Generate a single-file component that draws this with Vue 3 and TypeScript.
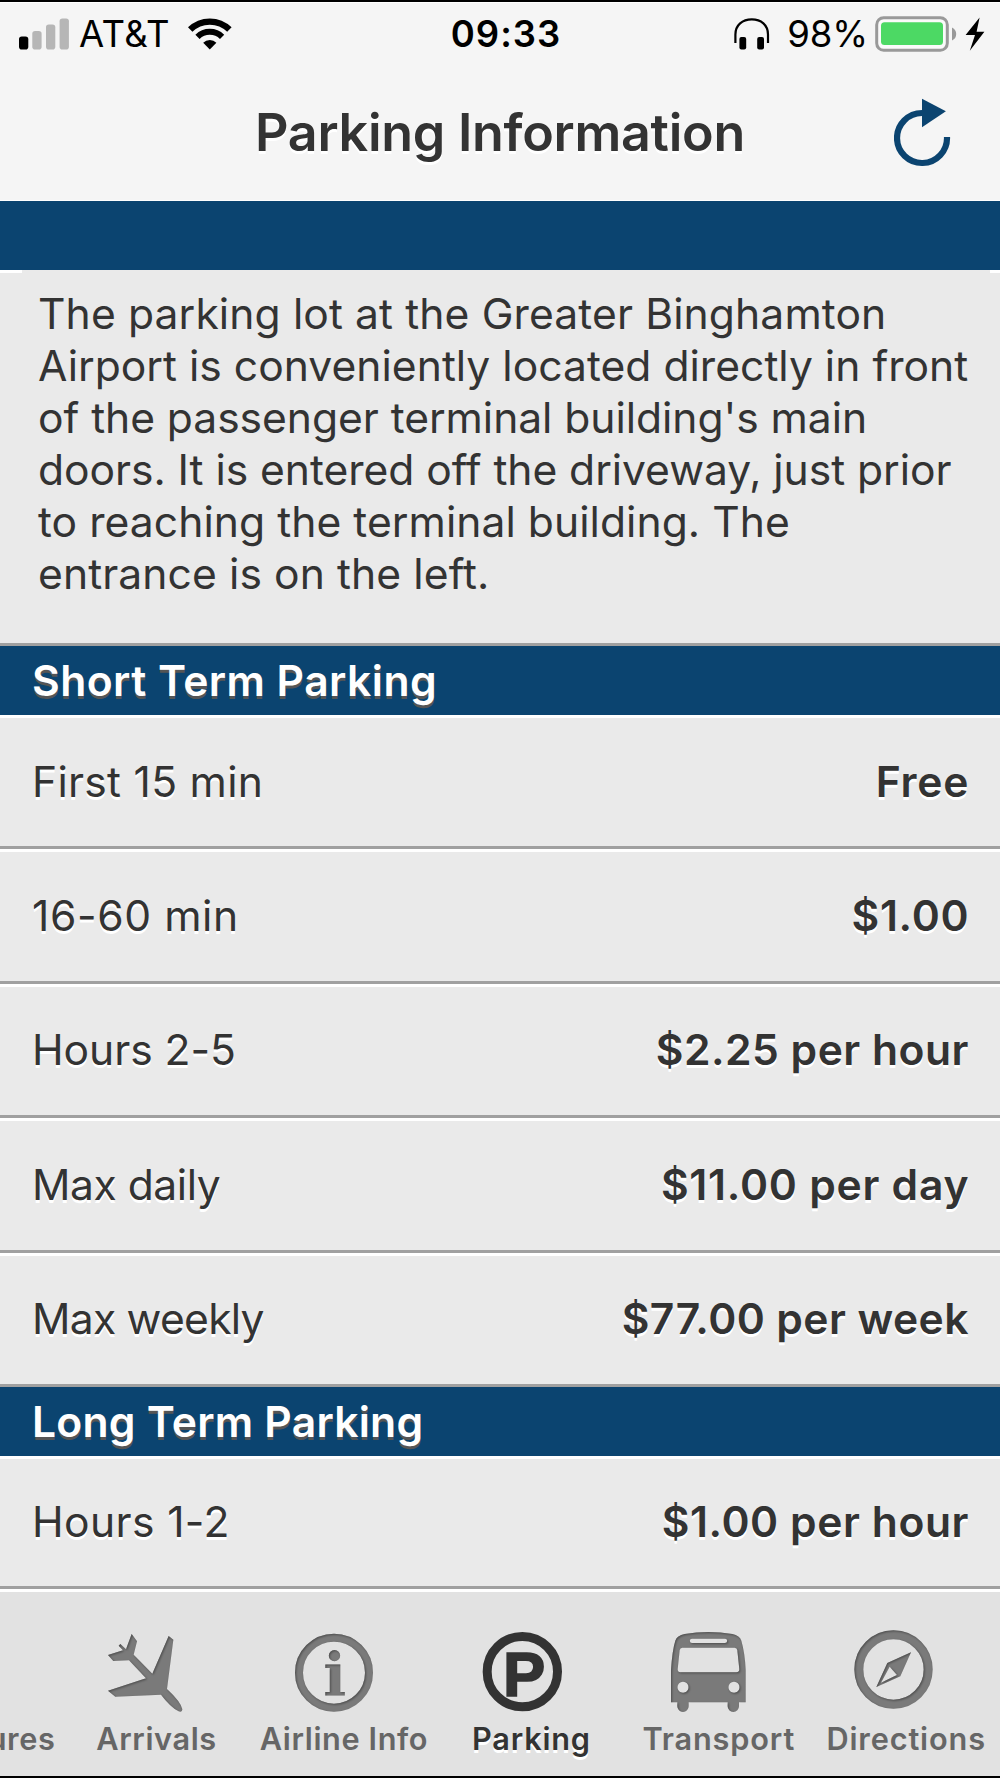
<script setup lang="ts">
interface Rate {
  label: string
  labelGap: number
  price: string
  priceGap: number
}

interface Section {
  title: string
  spacing: string
  rates: Rate[]
}

const intro: { text: string; gap: number }[] = [
  { text: 'The parking lot at the Greater Binghamton', gap: 0.11 },
  { text: 'Airport is conveniently located directly in front', gap: 0.02 },
  { text: "of the passenger terminal building's main", gap: -0.05 },
  { text: 'doors. It is entered off the driveway, just prior', gap: -0.05 },
  { text: 'to reaching the terminal building. The', gap: 0.05 },
  { text: 'entrance is on the left.', gap: 0.09 },
]

const sections: Section[] = [
  {
    title: 'Short Term Parking',
    spacing: 'wide',
    rates: [
      { label: 'First 15 min', labelGap: 0.28, price: 'Free', priceGap: 0.8 },
      { label: '16-60 min', labelGap: 0.6, price: '$1.00', priceGap: 0.65 },
      { label: 'Hours 2-5', labelGap: -0.05, price: '$2.25 per hour', priceGap: 0.5 },
      { label: 'Max daily', labelGap: -0.47, price: '$11.00 per day', priceGap: 0.75 },
      { label: 'Max weekly', labelGap: -0.75, price: '$77.00 per week', priceGap: 0.43 },
    ],
  },
  {
    title: 'Long Term Parking',
    spacing: 'normal',
    rates: [{ label: 'Hours 1-2', labelGap: 0.38, price: '$1.00 per hour', priceGap: 0.57 }],
  },
]
</script>

<template>
  <main class="screen">
    <div class="status">
      <div class="status-left">
        <svg width="50" height="32" viewBox="0 0 50 32">
          <rect x="0" y="18.5" width="9.3" height="13" rx="2.8" fill="#000" />
          <rect x="13.3" y="13" width="9.3" height="18.5" rx="2.8" fill="#b6b6b6" />
          <rect x="27" y="6.5" width="9.3" height="25" rx="2.8" fill="#b6b6b6" />
          <rect x="40.6" y="0.5" width="9.3" height="31" rx="2.8" fill="#b6b6b6" />
        </svg>
        <span class="carrier">AT&amp;T</span>
        <svg width="44" height="32" viewBox="0 0 44 32">
          <g fill="none" stroke="#000">
            <path d="M2.2 11.6A27.9 27.9 0 0 1 41.4 11.6" stroke-width="6.3" />
            <path d="M9.5 18.9A17.5 17.5 0 0 1 34.1 18.9" stroke-width="6" />
          </g>
          <path d="M21.8 31.5L15.2 24.8A9.3 9.3 0 0 1 28.4 24.8Z" />
        </svg>
      </div>
      <span class="time">09:33</span>
      <div class="status-right">
        <svg width="36" height="32" viewBox="0 0 36 32">
          <path d="M1.4 25V16.5C1.4 7 8.5 1.4 17.8 1.4S34 7 34 16.5V25" fill="none" stroke="#000" stroke-width="2.2" />
          <rect x="5.4" y="19" width="6.8" height="12.6" rx="2" />
          <rect x="23.2" y="19" width="6.8" height="12.6" rx="2" />
        </svg>
        <span class="percent">98%</span>
        <svg width="110" height="36" viewBox="0 0 110 36">
          <rect x="1.7" y="1.7" width="70.6" height="32.6" rx="7" fill="#fafafa" stroke="#999" stroke-width="3" />
          <rect x="6" y="6.3" width="62" height="22.8" rx="3.5" fill="#4cd964" />
          <path d="M77 11.5Q81.2 13.5 81.2 18T77 24.5Z" fill="#999" />
          <path d="M104.6 1.5L90.6 19H100L94.8 34.8L109.4 15.7H101.6Z" />
        </svg>
      </div>
    </div>

    <header class="header">
      <h1>Parking Information</h1>
      <svg class="refresh" width="60" height="70" viewBox="0 0 60 70">
        <path d="M28 16A25 25 0 1 0 53 40" fill="none" stroke="#0b4470" stroke-width="6.2" />
        <path d="M28 1.7L51.9 14.3L28 30.3Z" fill="#0b4470" />
      </svg>
    </header>

    <div class="band blank"></div>

    <section class="intro">
      <p>
        <template v-for="line in intro" :key="line.text"><span :style="{ letterSpacing: line.gap + 'px' }">{{ line.text }}</span><br /></template>
      </p>
    </section>

    <section v-for="section in sections" :key="section.title" class="section">
      <h2 class="band" :class="section.spacing">{{ section.title }}</h2>
      <div v-for="rate in section.rates" :key="rate.label" class="row">
        <span :style="{ letterSpacing: rate.labelGap + 'px' }">{{ rate.label }}</span>
        <span class="price" :style="{ letterSpacing: rate.priceGap + 'px', marginRight: -rate.priceGap + 'px' }">{{ rate.price }}</span>
      </div>
    </section>

    <nav class="tabs">
      <div class="tab">
        <span class="icon"></span>
        <span class="name">Departures</span>
      </div>
      <div class="tab">
        <svg class="icon" viewBox="293 171 300 270">
          <defs>
            <filter id="inset" x="-10%" y="-10%" width="120%" height="120%" color-interpolation-filters="sRGB">
              <feComponentTransfer in="SourceAlpha" result="outside">
                <feFuncA type="linear" slope="-1" intercept="1" />
              </feComponentTransfer>
              <feGaussianBlur in="outside" stdDeviation="2.5" result="soft" />
              <feOffset in="soft" dx="2" dy="4" result="moved" />
              <feComposite in="moved" in2="SourceAlpha" operator="in" result="edge" />
              <feColorMatrix in="edge" type="matrix" values="0 0 0 0 0.22  0 0 0 0 0.22  0 0 0 0 0.22  0 0 0 0.7 0" result="shade" />
              <feMerge>
                <feMergeNode in="SourceGraphic" />
                <feMergeNode in="shade" />
              </feMerge>
            </filter>
          </defs>
          <path
            filter="url(#inset)"
            d="M397 192L413 214L403 254L459 311L508 198L522 209L503 357Q545 396 549 418Q549 428 538 424Q513 411 485 374L348 380L326 362L440 325L389 271L342 273L326 255L371 241L358 227L363 222L380 238Z"
          />
        </svg>
        <span class="name">Arrivals</span>
      </div>
      <div class="tab">
        <svg class="icon" viewBox="855 171 300 270">
          <g filter="url(#inset)">
            <circle cx="1002" cy="308" r="105" fill="none" stroke="#7a7a7a" stroke-width="24" />
            <text class="info" x="1004" y="377" text-anchor="middle">i</text>
          </g>
        </svg>
        <span class="name">Airline Info</span>
      </div>
      <div class="tab active">
        <svg class="icon" viewBox="427 171 300 270">
          <circle cx="578" cy="305" r="105.5" fill="none" stroke="#333" stroke-width="27" />
          <text class="letter" x="520" y="377">P</text>
        </svg>
        <span class="name">Parking</span>
      </div>
      <div class="tab">
        <svg class="icon" viewBox="-2 171 300 270">
          <path
            filter="url(#inset)"
            fill-rule="evenodd"
            d="M34 397V300Q38 240 47 212Q52 197 75 192Q146 180 218 192Q240 197 245 212Q256 250 258 300V397H238V409A17 17 0 0 1 204 409V397H87V409A17 17 0 0 1 53 409V397ZM97 206A6.500 6.500 0 0 0 97 219H196A6.500 6.500 0 0 0 196 206ZM68 233Q61 233 60 241L54 298Q54 307 62 307H230Q239 307 239 298L233 241Q232 233 225 233ZM70 335A16.500 16.500 0 1 0 70.100 335ZM223 335A16.500 16.500 0 1 0 223.100 335Z"
          />
        </svg>
        <span class="name open">Transport</span>
      </div>
      <div class="tab">
        <svg class="icon" viewBox="562 171 300 270">
          <g filter="url(#inset)">
            <circle cx="701.500" cy="298.500" r="104" fill="none" stroke="#7a7a7a" stroke-width="27" />
            <path fill-rule="evenodd" d="M754 247L722 319L650 351L683 279ZM690 290L664 338L712 315Z" />
          </g>
        </svg>
        <span class="name open">Directions</span>
      </div>
    </nav>
  </main>
</template>

<style>
body {
  margin: 0;
}
</style>

<style scoped>
.screen {
  box-sizing: border-box;
  width: 1000px;
  height: 1778px;
  overflow: hidden;
  display: flex;
  flex-direction: column;
  border-top: 2px solid #000;
  border-bottom: 2px solid #000;
  background: #eaeaea;
  color: #333;
  font-family: Inter, 'Liberation Sans', sans-serif;
}

.status {
  display: grid;
  grid-template-columns: 1fr auto 1fr;
  align-items: center;
  flex: none;
  box-sizing: border-box;
  height: 67px;
  padding: 0 15px 4px 19px;
  border-top: 1px solid #fff;
  background: #f5f5f5;
  color: #000;
  font-size: 36.5px;
  line-height: 44px;
}

.status-left,
.status-right {
  display: flex;
  align-items: center;
}

.status-right {
  justify-content: flex-end;
}

.carrier {
  margin: 0 18px 0 10px;
  letter-spacing: 0.38px;
}

.time {
  padding-left: 8px;
  font-weight: 600;
  letter-spacing: 1px;
}

.percent {
  margin: 0 7px 0 17px;
  letter-spacing: -0.1px;
}

.header {
  display: grid;
  grid-template-columns: 1fr auto 1fr;
  align-items: center;
  flex: none;
  box-sizing: border-box;
  height: 132px;
  padding-bottom: 3px;
  border-bottom: 1px solid #fff;
  background: #f5f5f5;
}

h1 {
  grid-column: 2;
  margin: 0;
  font-size: 52px;
  font-weight: 600;
  line-height: 64px;
  letter-spacing: -0.28px;
  text-shadow: 0 3px 0 #fff;
}

.refresh {
  justify-self: end;
  margin: 0 46px 2px 0;
}

.band {
  flex: none;
  box-sizing: border-box;
  height: 69px;
  margin: 0;
  padding-left: 32px;
  background: #0b4470;
  color: #fff;
  font-size: 42.6px;
  font-weight: 600;
  line-height: 69px;
  letter-spacing: 0.25px;
  text-shadow: 0 3px 0 #555;
}

.band.wide {
  letter-spacing: 0.46px;
}

.band.blank {
  height: 68.5px;
}

.intro {
  flex: none;
  box-sizing: border-box;
  height: 376.5px;
  padding: 18.5px 0 0 38px;
  border-bottom: 3px solid #a0a0a0;
  background:
    linear-gradient(#fff, #fff) 0 0 / 22px 3px no-repeat,
    linear-gradient(#fff, #fff) 100% 0 / 10px 3px no-repeat,
    #eaeaea;
}

.intro p {
  margin: 0;
  font-size: 42.6px;
  line-height: 52px;
  white-space: nowrap;
}

.row {
  display: flex;
  align-items: center;
  justify-content: space-between;
  box-sizing: border-box;
  height: 134.4px;
  padding: 0 31.5px 1px 32px;
  border-top: 3px solid #fff;
  border-bottom: 3px solid #a0a0a0;
  font-size: 42.6px;
  line-height: 52px;
  text-shadow: 0 3px 0 #fff;
}

.section:nth-last-of-type(1) .row {
  height: 133.2px;
}

.price {
  font-weight: 600;
}

.tabs {
  display: flex;
  flex: 1;
  margin-left: -124.8px;
  border-top: 3px solid #fff;
  background: #e2e2e2;
}

.tab {
  display: flex;
  flex: none;
  flex-direction: column;
  align-items: center;
  width: 187.4px;
  padding-top: 35px;
  color: #666;
}

.icon {
  flex: none;
  width: 100px;
  height: 90px;
  margin-right: 18px;
  fill: #7a7a7a;
}

.name {
  margin: 2px -0.6px 0 0;
  font-size: 30.7px;
  font-weight: 600;
  line-height: 40px;
  letter-spacing: 0.62px;
  white-space: nowrap;
}

.name.open {
  letter-spacing: 0.85px;
}

.active .name {
  color: #333;
  letter-spacing: 0.8px;
  text-shadow: 0 3px 0 #fff;
}

.info {
  font: bold 182px 'DejaVu Serif', serif;
}

.letter {
  fill: #333;
  stroke: #333;
  stroke-width: 5px;
  font: bold 190px 'Liberation Sans', sans-serif;
}
</style>
